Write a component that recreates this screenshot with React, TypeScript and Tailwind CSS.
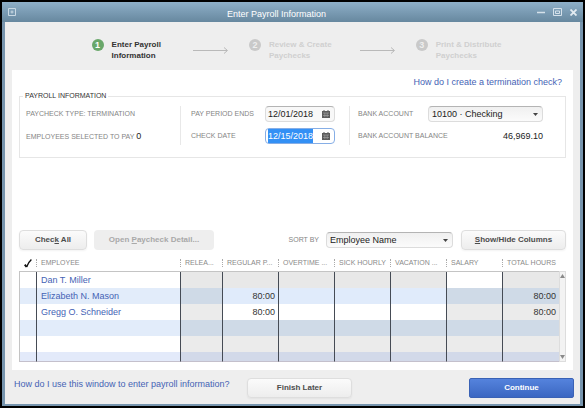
import React, { useEffect, useRef, useState } from 'react';

interface Employee {
  name: string;
  regular: string;
  total: string;
}

const employees: Employee[] = [
  { name: 'Dan T. Miller', regular: '', total: '' },
  { name: 'Elizabeth N. Mason', regular: '80:00', total: '80:00' },
  { name: 'Gregg O. Schneider', regular: '80:00', total: '80:00' },
];

// Cell colours: [name, releases, regular pay, overtime / sick / vacation, salary, total]
const rowColors = [
  ['bg-white', 'bg-[#e8e8e8]', 'bg-[#e8e8e8]', 'bg-[#e8e8e8]', 'bg-white', 'bg-[#e8e8e8]'],
  ['bg-[#e2ecfa]', 'bg-[#cfdae7]', 'bg-[#e0ebfb]', 'bg-[#e0ebfb]', 'bg-[#cfdae7]', 'bg-[#cfdae7]'],
  ['bg-white', 'bg-[#ebebeb]', 'bg-white', 'bg-white', 'bg-[#ebebeb]', 'bg-[#ebebeb]'],
  ['bg-[#e2ecfa]', 'bg-[#cfdae7]', 'bg-[#cfdae7]', 'bg-[#cfdae7]', 'bg-[#cfdae7]', 'bg-[#cfdae7]'],
  ['bg-white', 'bg-[#ebebeb]', 'bg-[#ebebeb]', 'bg-[#ebebeb]', 'bg-[#ebebeb]', 'bg-[#ebebeb]'],
  ['bg-[#e3eafa]', 'bg-[#d2d9e9]', 'bg-[#d2d9e9]', 'bg-[#d2d9e9]', 'bg-[#d2d9e9]', 'bg-[#d2d9e9]'],
];

const columns = ['RELEA...', 'REGULAR P...', 'OVERTIME ...', 'SICK HOURLY', 'VACATION ...', 'SALARY'];

const Arrow: React.FC = () => (
  <svg className="mt-[7px] mr-5 h-[9px] w-9 shrink-0" viewBox="0 0 36 9" fill="none" stroke="#b9b9b9" strokeWidth="1" aria-hidden="true">
    <path d="M0 4.5H34M31 1.5L34.5 4.5L31 7.5" />
  </svg>
);

interface StepProps {
  number: number;
  lines: [string, string];
  active?: boolean;
}

const Step: React.FC<StepProps> = ({ number, lines, active }) => (
  <li className="flex items-start">
    <span className={`flex h-3 w-3 items-center justify-center rounded-full text-[9px] leading-3 font-bold ${active ? 'bg-[#69a76a] text-white' : 'bg-[#c9c9c9] text-[#eeeeee]'}`}>
      {number}
    </span>
    <span className={`ml-2 text-[8px] leading-[11px] font-bold ${active ? 'text-[#333333]' : 'text-[#d0d0d0]'}`}>
      {lines[0]}<br />{lines[1]}
    </span>
  </li>
);

const CalendarIcon: React.FC = () => (
  <svg className="h-2 w-2 shrink-0" viewBox="0 0 8 8" aria-hidden="true">
    <path d="M0 1H1.5V0H2.5V1H5.5V0H6.5V1H8V8H0Z" fill="#5c5c5c" />
    <path d="M1 3H7M1 5.5H7" stroke="#a8a8a8" strokeWidth="0.6" />
    <path d="M2.5 3V7M4 3V7M5.5 3V7" stroke="#a8a8a8" strokeWidth="0.4" />
  </svg>
);

interface SelectProps {
  id: string;
  value: string;
}

const SelectBox: React.FC<SelectProps> = ({ id, value }) => (
  <div className="relative flex-1">
    <select id={id} defaultValue={value} className="block h-4 w-full appearance-none rounded-sm border border-[#dcdcdc] border-t-[#b4b4b4] bg-linear-to-b from-[#f0f0f0] to-[#fbfbfb] pr-4 pl-[3px] text-[9px] leading-[14px] text-[#222222]">
      <option>{value}</option>
    </select>
    <svg className="pointer-events-none absolute top-[7px] right-[5px] h-[3px] w-[5px]" viewBox="0 0 5 3" aria-hidden="true">
      <path d="M0 0H5L2.5 3Z" fill="#444444" />
    </svg>
  </div>
);

const labelClass = 'text-[7px] leading-4 whitespace-nowrap text-[#858585]';
const grayButton = 'h-5 rounded-sm border border-[#dedede] bg-linear-to-b from-[#fbfbfb] to-[#ededed] text-[8px] font-bold whitespace-nowrap text-[#4c4c4c] shadow-xs';
const lineClass = 'border-r border-r-[#454b55]';

const App: React.FC = () => {
  const [periodEnd, setPeriodEnd] = useState('12/01/2018');
  const [checkDate, setCheckDate] = useState('12/15/2018');
  const checkDateRef = useRef<HTMLInputElement>(null);

  // The check date opens focused with its text selected
  useEffect(() => {
    checkDateRef.current?.focus();
    checkDateRef.current?.select();
  }, []);

  return (
    <div className="flex min-h-screen flex-col bg-black p-[2px] font-['Liberation_Sans',Arial,sans-serif]">
      <div className="flex flex-1 flex-col border-x-[3px] border-b-2 border-[#7795ae] bg-[#eeeeee]">
        <header className="-mx-[3px] flex h-5 items-center justify-between bg-linear-to-b from-[#8eafc8] to-[#67889f] px-[6px]">
          <button aria-label="Window menu">
            <svg className="h-2 w-2" viewBox="0 0 8 8" fill="none" stroke="#c8d8e3" aria-hidden="true">
              <path d="M0.5 0.5H7.5V7.5H0.5Z" />
              <path d="M2.5 4H5.5M4 2.5V5.5" />
            </svg>
          </button>
          <h1 className="pt-1 text-[9px] leading-3 text-white">Enter Payroll Information</h1>
          <div className="flex w-10 items-center justify-between">
            <button aria-label="Minimize">
              <svg className="h-2 w-2" viewBox="0 0 8 8" stroke="#d5e1ea" strokeWidth="1.5" aria-hidden="true"><path d="M0 4.5H8" /></svg>
            </button>
            <button aria-label="Maximize">
              <svg className="h-2 w-[9px]" viewBox="0 0 9 8" fill="none" stroke="#d5e1ea" aria-hidden="true"><path d="M0.5 0.5H8.5V7.5H0.5ZM2.5 3H6.5V5.5H2.5Z" /></svg>
            </button>
            <button aria-label="Close">
              <svg className="h-[7px] w-[7px]" viewBox="0 0 7 7" stroke="#e3ebf1" strokeWidth="1.8" aria-hidden="true"><path d="M0.5 0.5L6.5 6.5M6.5 0.5L0.5 6.5" /></svg>
            </button>
          </div>
        </header>

        <ol className="flex h-12 items-start justify-center pt-[17px] pl-2">
          <Step number={1} lines={['Enter Payroll', 'Information']} active />
          <li className="ml-8"><Arrow /></li>
          <Step number={2} lines={['Review & Create', 'Paychecks']} />
          <li className="ml-7"><Arrow /></li>
          <Step number={3} lines={['Print & Distribute', 'Paychecks']} />
        </ol>

        <main className="mr-[7px] ml-[7px] flex flex-1 flex-col bg-white px-[7px] pb-2">
          <div className="flex h-5 items-end justify-end pr-1">
            <a href="#termination" className="text-[9px] leading-4 text-[#4563b5]">How do I create a termination check?</a>
          </div>

          <fieldset className="border border-[#e6e6e6] px-[6px] pb-3">
            <legend className="-ml-[3px] px-[2px] text-[7px] leading-3 text-[#333333]">PAYROLL INFORMATION</legend>
            <div className="flex pt-1">
              <div className="flex flex-1 flex-col gap-[6px]">
                <p className={labelClass}>PAYCHECK TYPE: TERMINATION</p>
                <p className={labelClass}>EMPLOYEES SELECTED TO PAY <span className="text-[9px] text-[#222222]">0</span></p>
              </div>
              <div className="flex w-[169px] flex-col gap-[6px] border-l border-[#e8e8e8] pr-[14px] pl-[10px]">
                <div className="flex justify-between">
                  <label htmlFor="period-end" className={labelClass}>PAY PERIOD ENDS</label>
                  <div className="flex h-4 w-[70px] items-center rounded-sm border border-[#dcdcdc] border-t-[#b4b4b4] bg-[#f8f8f8] pr-1 pl-[2px]">
                    <input id="period-end" value={periodEnd} onChange={e => setPeriodEnd(e.target.value)} className="w-full min-w-0 text-[9px] leading-[14px] text-[#222222] outline-none" />
                    <CalendarIcon />
                  </div>
                </div>
                <div className="flex justify-between">
                  <label htmlFor="check-date" className={labelClass}>CHECK DATE</label>
                  <div className="flex h-4 w-[70px] items-center rounded-sm border border-[#86aee6] bg-white pr-1 pl-[2px]">
                    <input id="check-date" ref={checkDateRef} value={checkDate} onChange={e => setCheckDate(e.target.value)} className="w-full min-w-0 text-[9px] leading-[14px] text-[#222222] outline-none selection:bg-[#3390f5] selection:text-white" />
                    <CalendarIcon />
                  </div>
                </div>
              </div>
              <div className="flex w-[210px] flex-col gap-[6px] border-l border-[#e8e8e8] pr-4 pl-2">
                <div className="flex">
                  <label htmlFor="bank-account" className={`w-[70px] ${labelClass}`}>BANK ACCOUNT</label>
                  <SelectBox id="bank-account" value="10100 · Checking" />
                </div>
                <div className="flex justify-between">
                  <span className={labelClass}>BANK ACCOUNT BALANCE</span>
                  <span className="text-[9px] leading-4 text-[#222222]">46,969.10</span>
                </div>
              </div>
            </div>
          </fieldset>

          <div className="mt-auto flex items-center pt-4">
            <button className={`w-[68px] ${grayButton}`}>Chec<u>k</u> All</button>
            <button disabled className="ml-[7px] h-5 w-[120px] rounded-sm bg-[#eeeeee] text-[8px] font-bold whitespace-nowrap text-[#a9a9a9]">Open <u>P</u>aycheck Detail...</button>
            <label htmlFor="sort-by" className={`ml-auto pr-[7px] ${labelClass}`}>SORT BY</label>
            <div className="mr-2 flex w-[127px]">
              <SelectBox id="sort-by" value="Employee Name" />
            </div>
            <button className={`w-[105px] ${grayButton}`}><u>S</u>how/Hide Columns</button>
          </div>

          <div className="mt-[9px] flex">
            <table className="flex-1 table-fixed border-separate border-spacing-0">
              <colgroup>
                <col className="w-[18px]" />
                <col />
                <col className="w-[42px]" />
                <col span={6} className="w-14" />
              </colgroup>
              <thead>
                <tr className="h-[13px] text-left text-[7px] text-[#8a8a8a]">
                  <th className="border-b border-[#c4c4c4] p-0 pb-1">
                    <div className="flex h-2 items-center justify-center border-r border-dotted border-[#aaaaaa]">
                      <svg className="h-[9px] w-2" viewBox="0 0 8 9" fill="none" stroke="#111111" aria-label="Selected">
                        <path d="M0.8 5.6L2.6 8" strokeWidth="2" />
                        <path d="M2.6 8Q4.2 3.5 7.4 0.6" strokeWidth="1.4" />
                      </svg>
                    </div>
                  </th>
                  <th className="border-b border-[#c4c4c4] p-0 pb-1 font-normal">
                    <div className="h-2 border-r border-dotted border-[#aaaaaa] pl-1 leading-2">EMPLOYEE</div>
                  </th>
                  {columns.map(column => (
                    <th key={column} className="border-b border-[#c4c4c4] p-0 pb-1 font-normal">
                      <div className="h-2 border-r border-dotted border-[#aaaaaa] pl-1 leading-2 whitespace-nowrap">{column}</div>
                    </th>
                  ))}
                  <th className="border-b border-[#c4c4c4] p-0 pb-1 font-normal">
                    <div className="h-2 pl-1 leading-2 whitespace-nowrap">TOTAL HOURS</div>
                  </th>
                </tr>
              </thead>
              <tbody className="text-[9px] leading-4 text-[#333333]">
                {rowColors.map((colors, i) => {
                  const employee = employees[i];
                  const height = i === rowColors.length - 1 ? 'h-[10px] border-b border-[#c4c0cc]' : 'h-4';
                  const cell = `p-0 ${height}`;
                  return (
                    <tr key={i}>
                      <td className={`${cell} border-l border-l-[#c4c4c4] ${lineClass} ${colors[0]}`} />
                      <td className={`${cell} ${lineClass} ${colors[0]} pl-1`}>
                        {employee && <a href="#employee" className="text-[#4563b5]">{employee.name}</a>}
                      </td>
                      <td className={`${cell} ${lineClass} ${colors[1]}`} />
                      <td className={`${cell} ${lineClass} ${colors[2]} pr-[3px] text-right`}>{employee?.regular}</td>
                      <td className={`${cell} ${lineClass} ${colors[3]}`} />
                      <td className={`${cell} ${lineClass} ${colors[3]}`} />
                      <td className={`${cell} ${lineClass} ${colors[3]}`} />
                      <td className={`${cell} ${lineClass} ${colors[4]}`} />
                      <td className={`${cell} ${colors[5]} pr-[3px] text-right`}>{employee?.total}</td>
                    </tr>
                  );
                })}
              </tbody>
            </table>
            <div className="mt-3 flex w-[7px] flex-col items-center justify-between border border-[#dddddd] bg-[#f3f3f3] py-[2px]" aria-hidden="true">
              <svg className="h-1 w-[5px]" viewBox="0 0 5 4"><path d="M0 4H5L2.5 0Z" fill="#8a8a8a" /></svg>
              <svg className="h-1 w-[5px]" viewBox="0 0 5 4"><path d="M0 0H5L2.5 4Z" fill="#8a8a8a" /></svg>
            </div>
          </div>
        </main>

        <footer className="flex h-[34px] items-start justify-between pr-[6px] pl-[9px]">
          <a href="#help" className="pt-2 text-[9px] leading-3 text-[#4563b5]">How do I use this window to enter payroll information?</a>
          <div className="flex pt-2">
            <button className={`mr-[117px] w-[105px] ${grayButton}`}>Finish Later</button>
            <button className="h-5 w-[105px] rounded-xs border border-[#3a62b5] bg-linear-to-b from-[#5583dd] to-[#3b67c2] text-[8px] font-bold text-white">Continue</button>
          </div>
        </footer>
      </div>
    </div>
  );
};

export default App;
